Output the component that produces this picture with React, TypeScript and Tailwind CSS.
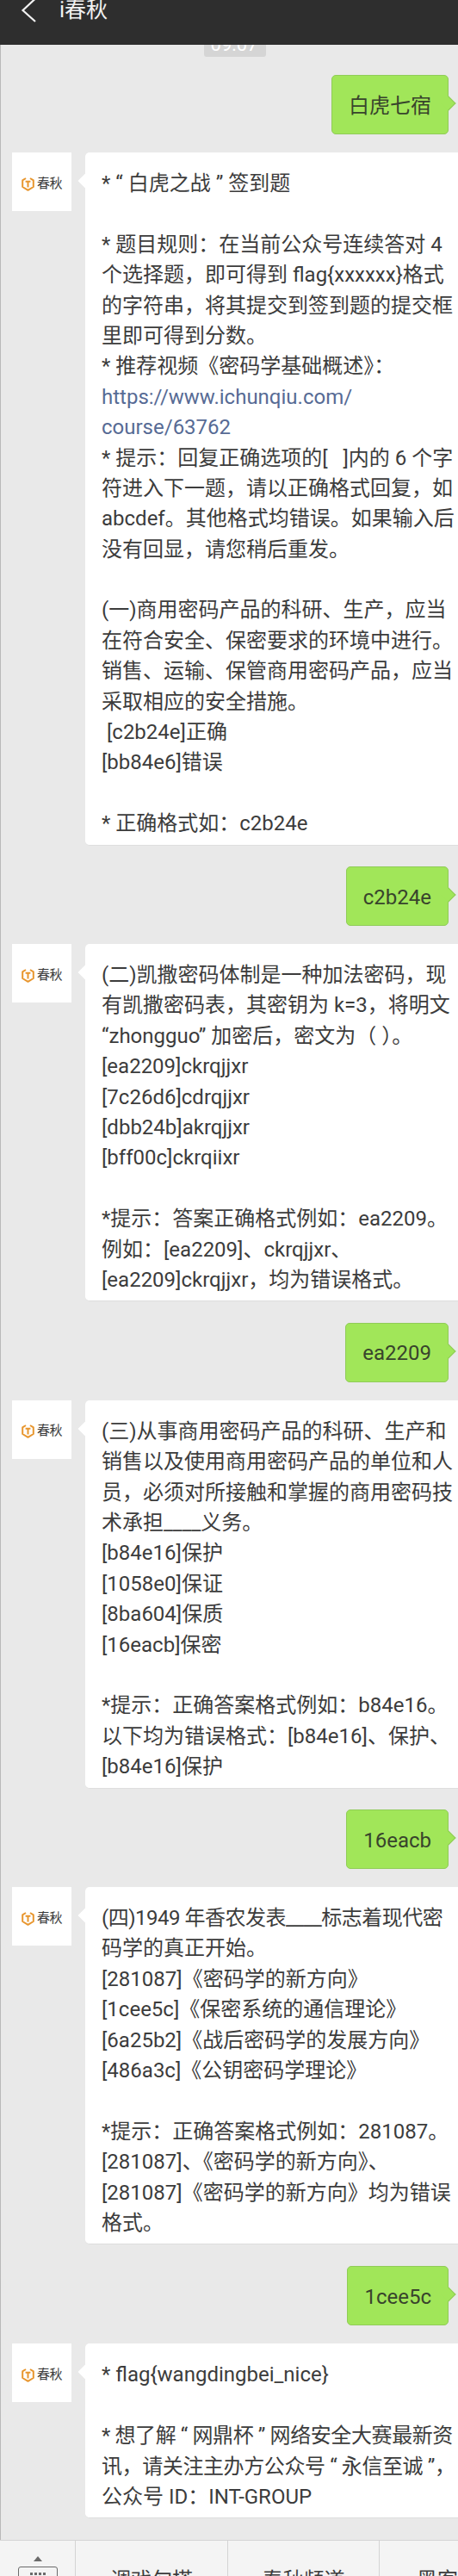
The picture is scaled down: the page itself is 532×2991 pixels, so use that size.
import type { ReactNode } from 'react';

const FONT = "font-['Roboto','Noto_Sans_CJK_SC',sans-serif]";

function Logo() {
  return (
    <div className="flex h-[68px] w-[69px] shrink-0 items-center justify-center gap-[3px] bg-white pt-[4px]">
      <svg width="15" height="17" viewBox="0 0 15 17" fill="none" aria-hidden="true">
        <path d="M5 2 L1.2 4.4 V12 L7.5 15.8 L13.8 12 V4.4 L10 2" stroke="#e8962e" strokeWidth="2" strokeLinejoin="round" />
        <path d="M4.6 5.8 H10.4 M7.5 5.8 V12.5" stroke="#e8962e" strokeWidth="2" />
      </svg>
      <span className="text-[15px] leading-[17px] tracking-[-0.5px] text-[#3a3a3a]">春秋</span>
    </div>
  );
}

function Sent({ text }: { text: string }) {
  return (
    <div className="relative mr-[11px] flex h-[69px] items-center self-end rounded-[5px] border border-[#90cc58] bg-[#a1e659] px-[19px] pt-[2px] text-[24px] text-[#38442c]">
      {text}
      <span className="absolute right-[-7px] top-[26px] h-[12px] w-[12px] rotate-45 border-r border-t border-[#90cc58] bg-[#a1e659]" />
    </div>
  );
}

function Received({ lines, link = [] }: { lines: ReactNode[]; link?: number[] }) {
  return (
    <div className="flex gap-[16px]">
      <Logo />
      <div className="relative flex-1 rounded-l-[5px] border-b border-[#dedede] bg-white pb-[6px] pl-[19px] pt-[19px] text-[24px] leading-[35.4px] text-[#3c3c3c]">
        <span className="absolute left-[-6px] top-[27px] h-[12px] w-[12px] rotate-45 bg-white" />
        {lines.map((line, i) => (
          <div key={i} className={`h-[35.4px] whitespace-pre ${link.includes(i) ? 'text-[#576b95]' : ''}`}>
            {line}
          </div>
        ))}
      </div>
    </div>
  );
}

export default function App() {
  return (
    <div className={`h-[2991px] w-[532px] overflow-hidden bg-[#e9e9e9] ${FONT}`}>
      <header className="relative z-10 flex h-[52px] items-start overflow-hidden bg-[#2e2e2e] text-white">
        <svg className="ml-[24px] mt-[-3px] shrink-0" width="19" height="30" viewBox="0 0 19 30" fill="none" aria-hidden="true">
          <path d="M17 1.5 L2.5 15 L17 28" stroke="#f2f2f2" strokeWidth="2.2" />
        </svg>
        <span className="ml-[26px] mt-[-6px] text-[25px] leading-[36px] text-[#f2f2f2]">i春秋</span>
      </header>

      <main className="flex h-[2897px] flex-col border-l border-[#b9b9b9] pl-[13px]">
        <div className="mt-[-16px] flex h-[30px] w-[72px] items-center justify-center self-center rounded-[3px] bg-[#d5d5d5] pr-[2px] text-[22px] text-white">
          09:07
        </div>

        <div className="mt-[21px] flex flex-col">
          <Sent text="白虎七宿" />
        </div>

        <div className="mt-[21px]">
          <Received
            link={[7, 8]}
            lines={[
              '* “ 白虎之战 ” 签到题',
              '',
              '* 题目规则：在当前公众号连续答对 4',
              '个选择题，即可得到 flag{xxxxxx}格式',
              '的字符串，将其提交到签到题的提交框',
              '里即可得到分数。',
              '* 推荐视频《密码学基础概述》：',
              'https://www.ichunqiu.com/',
              'course/63762',
              '* 提示：回复正确选项的[\u00a0\u00a0\u00a0]内的 6 个字',
              '符进入下一题，请以正确格式回复，如',
              'abcdef。其他格式均错误。如果输入后',
              '没有回显，请您稍后重发。',
              '',
              '(一)商用密码产品的科研、生产，应当',
              '在符合安全、保密要求的环境中进行。',
              '销售、运输、保管商用密码产品，应当',
              '采取相应的安全措施。',
              '\u00a0[c2b24e]正确',
              '[bb84e6]错误',
              '',
              '* 正确格式如：c2b24e',
            ]}
          />
        </div>

        <div className="mt-[24.5px] flex flex-col">
          <Sent text="c2b24e" />
        </div>

        <div className="mt-[21px]">
          <Received
            lines={[
              '(二)凯撒密码体制是一种加法密码，现',
              '有凯撒密码表，其密钥为 k=3，将明文',
              '“zhongguo” 加密后，密文为（ ）。',
              '[ea2209]ckrqjjxr',
              '[7c26d6]cdrqjjxr',
              '[dbb24b]akrqjjxr',
              '[bff00c]ckrqiixr',
              '',
              '*提示：答案正确格式例如：ea2209。',
              '例如：[ea2209]、ckrqjjxr、',
              '[ea2209]ckrqjjxr，均为错误格式。',
            ]}
          />
        </div>

        <div className="mt-[24.5px] flex flex-col">
          <Sent text="ea2209" />
        </div>

        <div className="mt-[21px]">
          <Received
            lines={[
              '(三)从事商用密码产品的科研、生产和',
              '销售以及使用商用密码产品的单位和人',
              '员，必须对所接触和掌握的商用密码技',
              '术承担____义务。',
              '[b84e16]保护',
              '[1058e0]保证',
              '[8ba604]保质',
              '[16eacb]保密',
              '',
              '*提示：正确答案格式例如：b84e16。',
              '以下均为错误格式：[b84e16]、保护、',
              '[b84e16]保护',
            ]}
          />
        </div>

        <div className="mt-[24.5px] flex flex-col">
          <Sent text="16eacb" />
        </div>

        <div className="mt-[21px]">
          <Received
            lines={[
              <span className="tracking-[-0.5px]">(四)1949 年香农发表____标志着现代密</span>,
              '码学的真正开始。',
              '[281087]《密码学的新方向》',
              '[1cee5c]《保密系统的通信理论》',
              '[6a25b2]《战后密码学的发展方向》',
              '[486a3c]《公钥密码学理论》',
              '',
              '*提示：正确答案格式例如：281087。',
              '[281087]、《密码学的新方向》、',
              '[281087]《密码学的新方向》均为错误',
              '格式。',
            ]}
          />
        </div>

        <div className="mt-[25px] flex flex-col">
          <Sent text="1cee5c" />
        </div>

        <div className="mt-[21px]">
          <Received
            lines={[
              '* flag{wangdingbei_nice}',
              '',
              <span className="tracking-[-0.4px]">* 想了解 “ 网鼎杯 ” 网络安全大赛最新资</span>,
              <span className="tracking-[-0.4px]">讯，请关注主办方公众号 “ 永信至诚 ”，</span>,
              '公众号 ID：INT-GROUP',
            ]}
          />
        </div>
      </main>

      <footer className="flex h-[92px] border-t border-[#d4d4d4] bg-[#f4f4f4] text-[24px] text-[#3c3c3c]">
        <div className="flex w-[88px] shrink-0 flex-col items-center border-r border-[#d4d4d4] pt-[18px]">
          <span className="h-0 w-0 border-x-[5px] border-b-[6px] border-x-transparent border-b-[#6b6b6b]" />
          <div className="mt-[6px] flex h-[30px] w-[46px] justify-center gap-[2px] rounded-[3px] border border-[#6b6b6b] pt-[6px]">
            <span className="h-[3px] w-[3px] bg-[#6b6b6b]" />
            <span className="h-[3px] w-[3px] bg-[#6b6b6b]" />
            <span className="h-[3px] w-[3px] bg-[#6b6b6b]" />
            <span className="h-[3px] w-[3px] bg-[#6b6b6b]" />
          </div>
        </div>
        <div className="flex w-[177px] shrink-0 justify-center border-r border-[#d4d4d4] pt-[28px]">调戏勾搭</div>
        <div className="flex w-[176px] shrink-0 justify-center border-r border-[#d4d4d4] pt-[28px]">春秋频道</div>
        <div className="flex-1 pl-[43px] pt-[28px]">黑客</div>
      </footer>
    </div>
  );
}
